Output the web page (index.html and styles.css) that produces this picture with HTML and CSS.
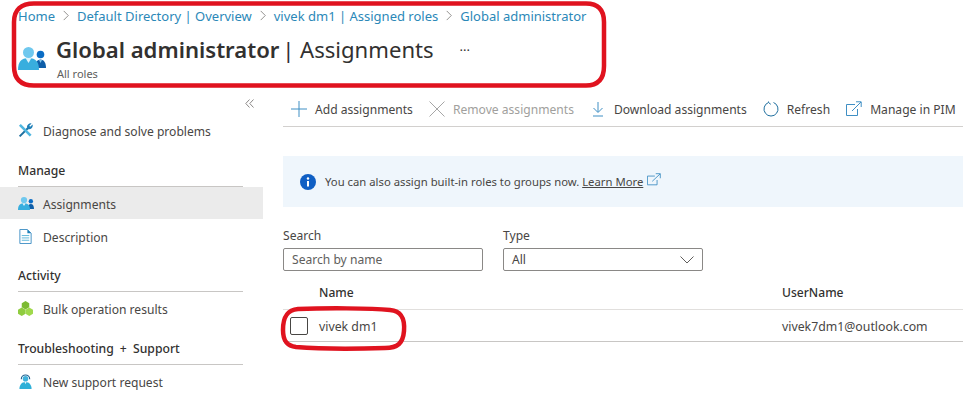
FILE: index.html
```html
<!DOCTYPE html>
<html lang="en">
<head>
    <meta charset="UTF-8">
    <meta name="viewport" content="width=device-width, initial-scale=1.0">
    <title>Global administrator | Assignments</title>
    <link rel="stylesheet" href="styles.css">
</head>
<body>
    <header class="page-head">
        <nav class="crumbs">
            <a>Home</a>
            <svg class="crumb-sep" viewBox="0 0 8 12"><path d="M1.500 1l5 5-5 5"/></svg>
            <a>Default Directory | Overview</a>
            <svg class="crumb-sep" viewBox="0 0 8 12"><path d="M1.500 1l5 5-5 5"/></svg>
            <a>vivek dm1 | Assigned roles</a>
            <svg class="crumb-sep" viewBox="0 0 8 12"><path d="M1.500 1l5 5-5 5"/></svg>
            <a>Global administrator</a>
        </nav>
        <div class="title-row">
            <svg class="title-icon" viewBox="0 0 28 23">
                <circle cx="22.500" cy="7.500" r="3.800" fill="#0a6cc4"/>
                <path d="M17 21c0-5 2-8.500 5.500-8.500S28 16 28 21z" fill="#0f5ea8"/>
                <path d="M21 13l1.500 3 1.500-3z" fill="#7fc4ea"/>
                <circle cx="10.500" cy="5.500" r="5.500" fill="#6fc8ee"/>
                <path d="M0 23c0-8 3-12 10.500-12S21 15 21 23z" fill="#38aede"/>
                <path d="M7.500 11l3 5 3-5z" fill="#dff3fb"/>
            </svg>
            <div>
                <h1><strong>Global administrator</strong> <span class="title-light">| Assignments</span><span class="more">···</span></h1>
                <p class="subtitle">All roles</p>
            </div>
        </div>
    </header>

    <div class="layout">
        <aside class="sidebar">
            <div class="collapse">
                <svg viewBox="0 0 9 9"><path d="M4.500 .5L.8 4.500l3.700 4M8.500 .5L4.800 4.500l3.700 4"/></svg>
            </div>
            <a class="side-item">
                <svg class="side-icon" viewBox="0 0 16 16">
                    <path d="M1 13.500L10 4.500l1.500 1.500-9 9z" fill="#1d6f9f"/>
                    <path d="M9.500 4.500a4 4 0 0 1 5-4L12 3l1 1 2.500-2.500a4 4 0 0 1-5 5z" fill="#1d7fb8"/>
                    <path d="M3 1l11.500 11.500-2 2L1 3z" fill="#4fb6e0"/>
                </svg>
                Diagnose and solve problems
            </a>

            <h2 class="side-heading">Manage</h2>
            <a class="side-item active">
                <svg class="side-icon wide" viewBox="0 0 28 23">
                    <circle cx="22.500" cy="7.500" r="3.800" fill="#0a6cc4"/>
                    <path d="M17 21c0-5 2-8.500 5.500-8.500S28 16 28 21z" fill="#0f5ea8"/>
                    <circle cx="10.500" cy="5.500" r="5.500" fill="#6fc8ee"/>
                    <path d="M0 23c0-8 3-12 10.500-12S21 15 21 23z" fill="#38aede"/>
                    <path d="M7.500 11l3 5 3-5z" fill="#dff3fb"/>
                </svg>
                Assignments
            </a>
            <a class="side-item">
                <svg class="side-icon" viewBox="0 0 16 16">
                    <path d="M2 .5h8l4 4v11H2z" fill="#fff" stroke="#3f8fc4"/>
                    <path d="M10 .5v4h4z" fill="#1d7fb8"/>
                    <path d="M4 7h8M4 9.500h8M4 12h8" stroke="#59b4d9"/>
                </svg>
                Description
            </a>

            <h2 class="side-heading tight">Activity</h2>
            <a class="side-item">
                <svg class="side-icon" viewBox="0 0 16 16">
                    <path d="M8 0l4 2.300v4.400L8 9 4 6.700V2.300z" fill="#7cba32"/>
                    <path d="M4 7l4 2.300v4.400L4 16l-4-2.300V9.300z" fill="#8fcc3f"/>
                    <path d="M12 7l4 2.300v4.400L12 16l-4-2.300V9.300z" fill="#a0d94c"/>
                </svg>
                Bulk operation results
            </a>

            <h2 class="side-heading">Troubleshooting + Support</h2>
            <a class="side-item">
                <svg class="side-icon" viewBox="0 0 16 16">
                    <circle cx="8" cy="5" r="3" fill="#3fb2dc"/>
                    <path d="M3.500 5.500a4.500 4.500 0 0 1 9 0" fill="none" stroke="#1d5f8f" stroke-width="1.200"/>
                    <path d="M1.500 16c0-4.500 2.500-7.500 6.500-7.500s6.500 3 6.500 7.500z" fill="#2fb0d8"/>
                    <path d="M7 8.500h2L8 11z" fill="#e6f6fc"/>
                </svg>
                New support request
            </a>
        </aside>

        <main class="content">
            <div class="toolbar">
                <button class="tool">
                    <svg class="tool-icon" viewBox="0 0 16 16"><path d="M8 0v16M0 8h16" stroke="#3f8fc4"/></svg>
                    Add assignments
                </button>
                <button class="tool disabled">
                    <svg class="tool-icon" viewBox="0 0 16 16"><path d="M.5.500l15 15M15.500.500l-15 15" stroke="#a6a6a6"/></svg>
                    Remove assignments
                </button>
                <button class="tool download">
                    <svg class="tool-icon small" viewBox="0 0 12 16"><path d="M6 1v10M1.500 7L6 11.500 10.500 7M1 15h10" stroke="#3f8fc4"/></svg>
                    Download assignments
                </button>
                <button class="tool">
                    <svg class="tool-icon" viewBox="0 0 16 16"><path d="M10.500 1.500a7 7 0 1 1-5 0M5.500 1.500v-1M5.500 1.500l2.300 1.800" stroke="#1f6f9f"/></svg>
                    Refresh
                </button>
                <button class="tool">
                    <svg class="tool-icon" viewBox="0 0 16 16"><path d="M9 3.500H.5v11h11V8M6 10L15 1M10 .8h5.200V6" stroke="#3f8fc4"/></svg>
                    Manage in PIM
                </button>
            </div>

            <div class="banner">
                <svg class="info-icon" viewBox="0 0 16 16">
                    <circle cx="8" cy="8" r="8" fill="#0f5fc4"/>
                    <rect x="7" y="7" width="2" height="5.500" fill="#fff"/>
                    <circle cx="8" cy="4.500" r="1.200" fill="#fff"/>
                </svg>
                <span>You can also assign built-in roles to groups now. <a class="banner-link">Learn More</a></span>
                <svg class="banner-ext" viewBox="0 0 16 16"><path d="M9 3.500H.5v10h11V8M6 9.500L15 1M10 .8h5.200V6" stroke="#3f8fc4"/></svg>
            </div>

            <div class="filters">
                <div class="field">
                    <label for="search">Search</label>
                    <input id="search" type="text" placeholder="Search by name">
                </div>
                <div class="field">
                    <label>Type</label>
                    <div class="select">
                        All
                        <svg viewBox="0 0 14 8"><path d="M.5.500L7 7l6.500-6.500"/></svg>
                    </div>
                </div>
            </div>

            <div class="table">
                <div class="row head">
                    <div class="col-name">Name</div>
                    <div>UserName</div>
                </div>
                <div class="row body">
                    <div class="col-check"><span class="checkbox"></span></div>
                    <div class="col-name">vivek dm1</div>
                    <div>vivek7dm1@outlook.com</div>
                </div>
            </div>
        </main>
    </div>

    <!-- red marks drawn over the screenshot -->
    <svg class="marks" viewBox="0 0 963 404">
        <path d="M34 3.500H586C598 3.500 604 10 604 22V66C604 79 598 85.500 586 85.500H34C21 85.500 14 79 14 66V22C14 10 21 3.500 34 3.500Z"/>
        <path d="M298 309C325 308 370 308 390 310C401 311 405 318 404 331C403 343 398 348 385 348C355 349 320 349 296 347C287 346 283 341 283 330C283 317 287 310 298 309Z"/>
    </svg>
</body>
</html>
```

FILE: styles.css
```css
body {
    margin: 0;
    width: 963px;
    height: 404px;
    overflow: hidden;
    position: relative;
    background: #fff;
    color: #323130;
    font-family: "Noto Sans", "Open Sans", sans-serif;
    font-size: 12.100px;
}

a {
    color: inherit;
    text-decoration: none;
}

.page-head {
    height: 88px;
    padding: 7px 0 0 18px;
    box-sizing: border-box;
}

.crumbs {
    display: flex;
    align-items: center;
    height: 17px;
    font-size: 13px;
    color: #2b88b8;
}

.crumb-sep {
    width: 8px;
    height: 11px;
    margin: 0 7px;
    fill: none;
    stroke: #8a8886;
}

.title-row {
    display: flex;
    align-items: flex-start;
    margin-top: 7px;
}

.title-icon {
    width: 28px;
    height: 23px;
    margin: 16px 11px 0 0;
}

h1 {
    margin: 0 0 0 -1px;
    font-size: 22.100px;
    line-height: 36px;
    font-weight: 400;
    white-space: nowrap;
}

h1 strong {
    font-weight: 600;
}

.title-light {
    margin-left: -3px;
}

.more {
    font-size: 13px;
    margin-left: 26px;
    vertical-align: 3px;
}

.subtitle {
    margin: -2px 0 0;
    font-size: 11px;
    line-height: 15px;
    color: #605e5c;
}

.layout {
    display: flex;
}

.sidebar {
    width: 263px;
    flex-shrink: 0;
}

.collapse {
    display: flex;
    justify-content: flex-end;
    height: 26px;
    padding: 11px 9px 0 0;
    box-sizing: border-box;
}

.collapse svg {
    width: 9px;
    height: 9px;
    fill: none;
    stroke: #8a8886;
}

.side-item {
    display: flex;
    align-items: center;
    height: 32px;
    box-sizing: border-box;
    padding: 3px 0 0 18px;
    margin-bottom: 1px;
    color: #484644;
}

.side-item.active {
    background: #ebebeb;
}

.side-icon {
    width: 15px;
    height: 15px;
    margin: -2px 10px 0 0;
    flex-shrink: 0;
}

.side-icon.wide {
    width: 16px;
    margin-right: 9px;
}

.side-heading {
    margin: 9px 20px 0 18px;
    padding: 8px 0 7px;
    font-size: 12.200px;
    line-height: 16px;
    font-weight: 500;
    word-spacing: 3px;
    color: #323130;
    border-bottom: 1px solid #c8c6c4;
}

.side-heading.tight {
    margin-top: 8px;
}

.content {
    flex: 1;
    padding-left: 20px;
    min-width: 0;
}

.toolbar {
    display: flex;
    align-items: center;
    height: 39px;
    box-sizing: border-box;
    padding: 4px 0 0 8px;
    border-bottom: 1px solid #d2d0ce;
    white-space: nowrap;
}

.tool {
    display: flex;
    align-items: center;
    padding: 0;
    margin: 0 16px 0 0;
    border: 0;
    background: none;
    font: inherit;
    color: #484644;
}

.tool.disabled {
    color: #a19f9d;
    margin-right: 18px;
}

.tool-icon {
    width: 16px;
    height: 16px;
    margin: 0 8px 0 0;
    fill: none;
}

.tool-icon.small {
    width: 12px;
    margin-right: 10px;
}

.banner {
    display: flex;
    align-items: center;
    height: 51px;
    margin-top: 29px;
    padding-left: 17px;
    background: #eff6fc;
    font-size: 11.300px;
    color: #484644;
}

.info-icon {
    width: 16px;
    height: 16px;
    margin-right: 9px;
}

.banner-link {
    text-decoration: underline;
}

.banner-ext {
    width: 14px;
    height: 14px;
    margin: -4px 0 0 4px;
    fill: none;
}

.filters {
    display: flex;
    gap: 20px;
    margin-top: 21px;
}

.field {
    display: flex;
    flex-direction: column;
    width: 200px;
}

.field label {
    line-height: 16px;
    margin-bottom: 4px;
    color: #484644;
}

.field input,
.select {
    box-sizing: border-box;
    height: 23px;
    border: 1px solid #8a8886;
    border-radius: 2px;
    padding: 0 8px;
    font: inherit;
    color: #484644;
    background: #fff;
}

.field input::placeholder {
    color: #605e5c;
    opacity: 1;
}

.select {
    display: flex;
    align-items: center;
    justify-content: space-between;
}

.select svg {
    width: 14px;
    height: 8px;
    fill: none;
    stroke: #605e5c;
}

.table {
    margin-top: 9px;
}

.row {
    display: flex;
    align-items: center;
}

.row.head {
    height: 25px;
    padding-bottom: 4px;
    border-bottom: 1px solid #e1dfdd;
    font-weight: 500;
}

.row.body {
    height: 32px;
    box-sizing: border-box;
    padding-top: 1px;
    border-bottom: 1px solid #c8c6c4;
    color: #484644;
    font-size: 12.300px;
}

.col-check {
    width: 36px;
    padding-left: 7px;
    box-sizing: border-box;
    display: flex;
    margin-right: -36px;
}

.checkbox {
    width: 18px;
    height: 18px;
    box-sizing: border-box;
    border: 1px solid #484644;
    border-radius: 2px;
}

.col-name {
    width: 463px;
    margin-left: 36px;
}

.marks {
    position: absolute;
    left: 0;
    top: 0;
    width: 963px;
    height: 404px;
    fill: none;
    stroke: #e0131f;
    stroke-width: 4.500;
    pointer-events: none;
}
```
